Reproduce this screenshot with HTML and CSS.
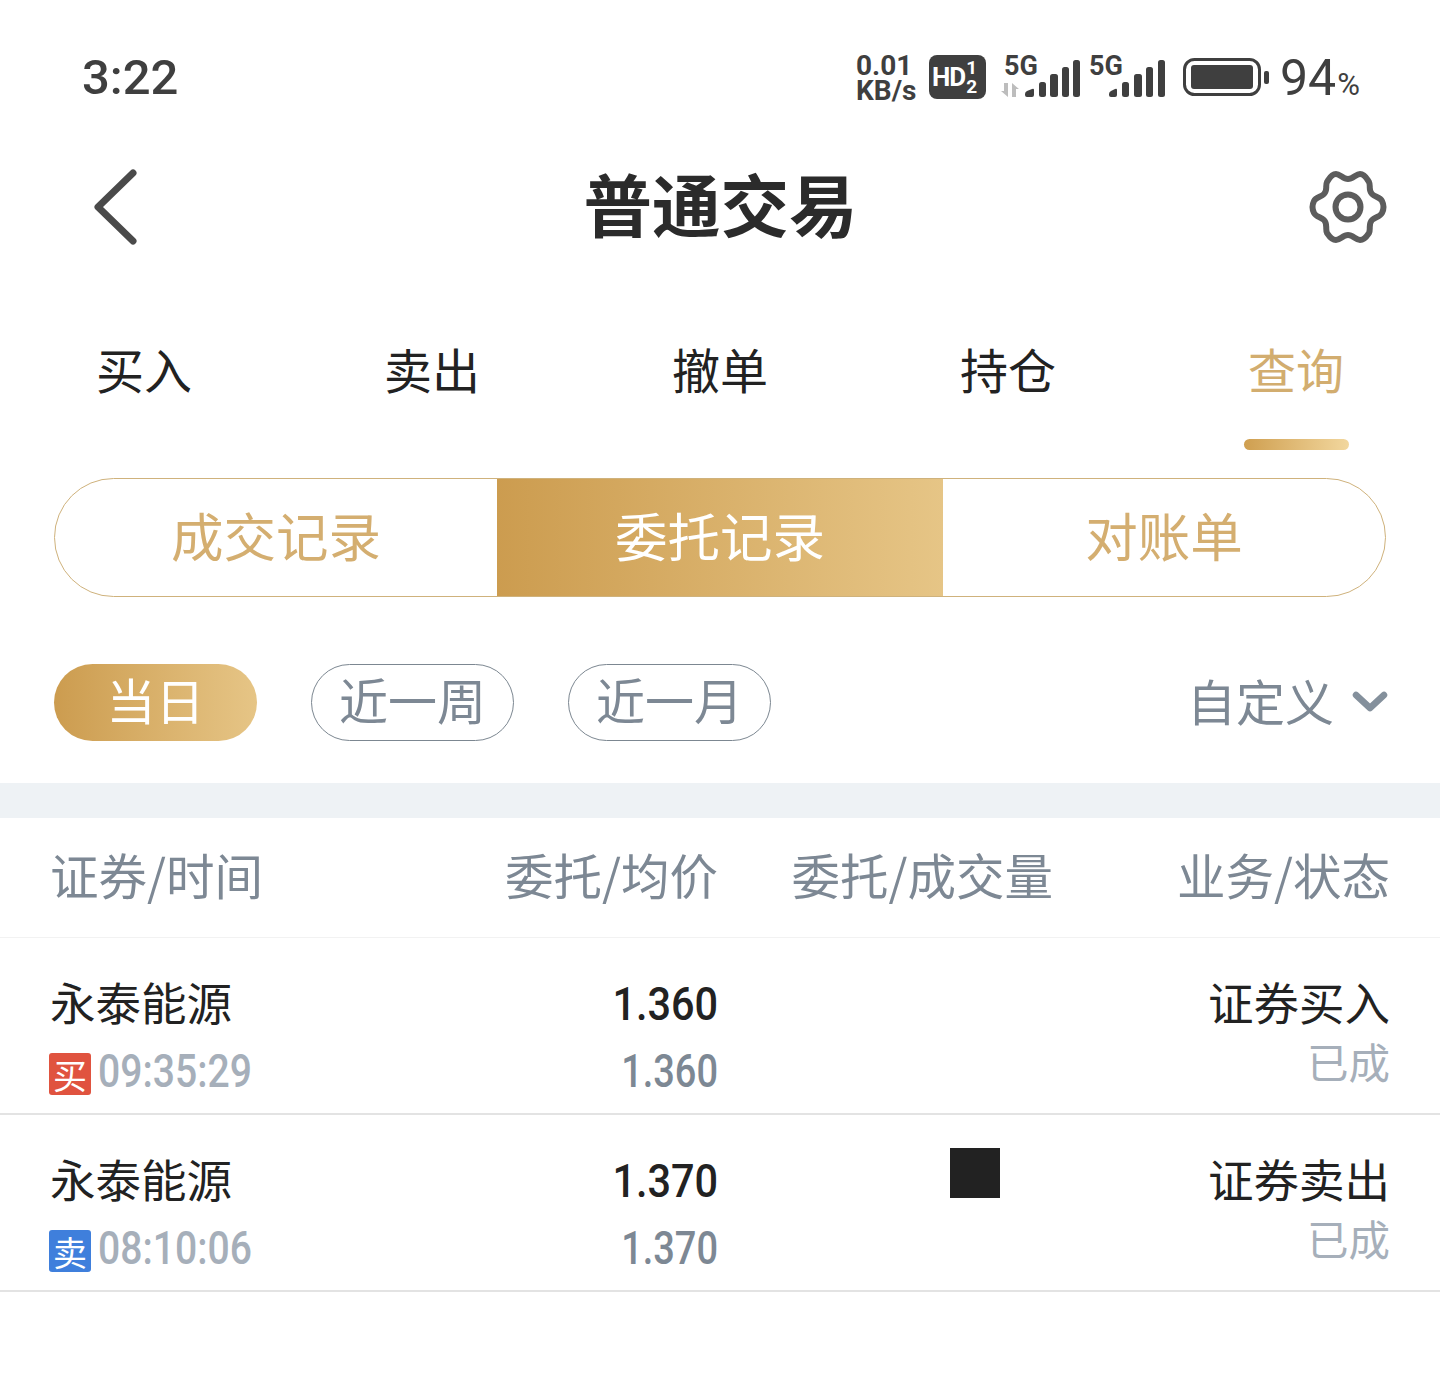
FILE: index.html
```html
<!DOCTYPE html>
<html lang="zh-CN">
<head>
<meta charset="utf-8">
<title>普通交易</title>
<link rel="stylesheet" href="styles.css">
</head>
<body>
<div class="page">
  <div class="statusbar">
    <span class="clock">3:22</span>
    <div class="status-right">
      <div class="speed"><span>0.01</span><span>KB/s</span></div>
      <div class="hd"><span class="hd-t">HD</span><span class="hd-n"><span>1</span><span>2</span></span></div>
      <div class="net net-a">
        <span class="net-t">5G</span>
        <svg class="sig" width="82" height="50" viewBox="0 0 82 50">
          <path d="M4 35h4v14L1 43h3zM12 35v14h4v-8h3z" fill="#bdbdbd"/>
          <path d="M25 46q0-2 2-3l5-2q2-1 2 1v5q0 2-2 2h-5q-2 0-2-2z" fill="#3f3f3f"/>
          <rect x="39" y="34" width="7" height="15" rx="2.500" fill="#3f3f3f"/>
          <rect x="50" y="26" width="8" height="23" rx="2.500" fill="#3f3f3f"/>
          <rect x="62" y="19" width="7" height="30" rx="2.500" fill="#3f3f3f"/>
          <rect x="73" y="12" width="7" height="37" rx="2.500" fill="#3f3f3f"/>
        </svg>
      </div>
      <div class="net net-b">
        <span class="net-t">5G</span>
        <svg class="sig" width="76" height="50" viewBox="0 0 76 50">
          <path d="M20 46q0-2 2-3l4-2q2-1 2 1v5q0 2-2 2h-4q-2 0-2-2z" fill="#3f3f3f"/>
          <rect x="33" y="34" width="7" height="15" rx="2.500" fill="#3f3f3f"/>
          <rect x="45" y="26" width="8" height="23" rx="2.500" fill="#3f3f3f"/>
          <rect x="57" y="19" width="7" height="30" rx="2.500" fill="#3f3f3f"/>
          <rect x="69" y="12" width="7" height="37" rx="2.500" fill="#3f3f3f"/>
        </svg>
      </div>
      <svg class="battery" width="86" height="38" viewBox="0 0 86 38">
        <rect x="1.500" y="1.500" width="75" height="35" rx="10" fill="none" stroke="#3f3f3f" stroke-width="3"/>
        <rect x="8" y="7" width="62" height="24" rx="3" fill="#3f3f3f"/>
        <rect x="81" y="13" width="5" height="13" rx="2" fill="#3f3f3f"/>
      </svg>
      <span class="pct">94<small>%</small></span>
    </div>
  </div>

  <div class="navbar">
    <svg class="back" width="44" height="76" viewBox="0 0 44 76"><path d="M39 4 4 38l35 34" fill="none" stroke="#4a4a4a" stroke-width="7" stroke-linecap="round" stroke-linejoin="round"/></svg>
    <h1 class="title">普通交易</h1>
    <svg class="gear" width="78" height="76" viewBox="0 0 78 76">
      <path d="M27 5c4 0 7 5 12 5s8-5 12-5c5 0 7 5 9 8 2 4-1 8 3 12 3 3 8 3 10 7 2 4 2 8 0 12-2 4-7 4-10 7-4 4-1 9-3 13-2 3-4 7-9 7-4 0-7-5-12-5s-8 5-12 5c-5 0-7-4-9-7-2-4 1-9-3-13-3-3-8-3-10-7-2-4-2-8 0-12 2-4 7-4 10-7 4-4 1-8 3-12 2-3 4-8 9-8z" fill="none" stroke="#5c5c5c" stroke-width="6" stroke-linejoin="round"/>
      <circle cx="39" cy="38" r="12.500" fill="none" stroke="#5c5c5c" stroke-width="6"/>
    </svg>
  </div>

  <div class="tabs">
    <div class="tab">买入</div>
    <div class="tab">卖出</div>
    <div class="tab">撤单</div>
    <div class="tab">持仓</div>
    <div class="tab tab-active">查询</div>
  </div>

  <div class="segment">
    <div class="seg">成交记录</div>
    <div class="seg seg-active">委托记录</div>
    <div class="seg">对账单</div>
  </div>

  <div class="filters">
    <div class="pill pill-active">当日</div>
    <div class="pill">近一周</div>
    <div class="pill">近一月</div>
    <div class="custom"><span class="custom-t">自定义</span>
      <svg class="chev" width="36" height="24" viewBox="0 0 36 24"><path d="M4 5l14 13L32 5" fill="none" stroke="#84909c" stroke-width="6.500" stroke-linecap="round" stroke-linejoin="round"/></svg>
    </div>
  </div>

  <div class="band"></div>

  <div class="thead">
    <div class="c1">证券/时间</div>
    <div class="c2">委托/均价</div>
    <div class="c3">委托/成交量</div>
    <div class="c4">业务/状态</div>
  </div>

  <div class="row">
    <div class="c1">
      <div class="name">永泰能源</div>
      <div class="meta"><span class="badge buy">买</span><span class="num time">09:35:29</span></div>
    </div>
    <div class="c2">
      <div class="num price">1.360</div>
      <div class="num avg">1.360</div>
    </div>
    <div class="c3"></div>
    <div class="c4">
      <div class="biz">证券买入</div>
      <div class="state">已成</div>
    </div>
  </div>

  <div class="row">
    <div class="c1">
      <div class="name">永泰能源</div>
      <div class="meta"><span class="badge sell">卖</span><span class="num time">08:10:06</span></div>
    </div>
    <div class="c2">
      <div class="num price">1.370</div>
      <div class="num avg">1.370</div>
    </div>
    <div class="c3"><span class="mask"></span></div>
    <div class="c4">
      <div class="biz">证券卖出</div>
      <div class="state">已成</div>
    </div>
  </div>
</div>
</body>
</html>
```
FILE: styles.css
```css
* { box-sizing: border-box; }
html, body { margin: 0; padding: 0; background: #fff; }
body { font-family: "Noto Sans CJK SC", "Noto Sans", sans-serif; color: #222; }
.page { width: 1440px; height: 1398px; overflow: hidden; background: #fff; }

.statusbar { height: 154px; display: flex; align-items: flex-start; padding: 49px 80px 0 82px; }
.clock { font-family: Roboto, sans-serif; font-size: 49px; font-weight: 500; line-height: 58px; color: #3f3f3f; }
.status-right { margin: -1px 0 0 auto; display: flex; align-items: flex-start; color: #3f3f3f; font-family: Roboto, sans-serif; }
.speed { width: 62px; margin-top: 5px; display: flex; flex-direction: column; font-size: 28px; line-height: 25px; font-weight: 700; white-space: nowrap; }
.hd { width: 57px; height: 44px; margin: 7px 0 0 11px; border-radius: 8px; background: #3f3f3f; color: #fff; display: flex; align-items: center; padding-left: 3px; font-weight: 700; }
.hd-t { font-size: 26px; letter-spacing: -1px; }
.hd-n { display: flex; flex-direction: column; font-size: 19px; line-height: 19px; margin-left: 1px; }
.net { position: relative; height: 50px; }
.net-a { width: 82px; margin-left: 14px; }
.net-b { width: 76px; margin-left: 7px; }
.net-t { position: absolute; left: 4px; top: 3px; font-size: 27px; line-height: 30px; font-weight: 700; z-index: 1; }
.net-b .net-t { left: 0; }
.sig { display: block; }
.battery { margin: 10px 0 0 18px; flex: none; }
.pct { margin-left: 11px; width: 80px; font-size: 50px; line-height: 60px; white-space: nowrap; }
.pct small { font-size: 31px; margin-left: 1px; }

.navbar { height: 106px; display: flex; align-items: center; padding: 0 53px 0 94px; }
.back { flex: none; }
.title { flex: 1; margin: 0; padding: 0 6px 9px 0; text-align: center; font-size: 68.500px; line-height: 96px; font-weight: 700; color: #2b2b2b; }
.gear { flex: none; }

.tabs { margin-top: 60px; display: grid; grid-template-columns: repeat(5, 288px); height: 158px; }
.tab { font-size: 48px; line-height: 96px; height: 158px; text-align: center; color: #222; position: relative; }
.tab-active { color: #d2ad6f; }
.tab-active::after { content: ""; position: absolute; left: 92px; top: 119px; width: 105px; height: 11px; border-radius: 6px; background: linear-gradient(90deg, #cf9f50, #f2d79e); }

.segment { margin: 0 54px; height: 119px; border: 1px solid #cfb27c; border-radius: 60px; display: grid; grid-template-columns: 442px 446px 1fr; overflow: hidden; }
.seg { font-size: 52.500px; line-height: 111px; text-align: center; color: #d4ae70; }
.seg-active { color: #fff; background: linear-gradient(90deg, #cc9c4f, #e6c586); }

.filters { margin: 67px 52px 0 54px; height: 77px; display: flex; gap: 54px; align-items: center; }
.pill { width: 203px; height: 77px; border: 1px solid #7c8791; border-radius: 39px; font-size: 49px; line-height: 68px; text-align: center; color: #7d8894; }
.pill-active { border: 0; color: #fff; background: linear-gradient(90deg, #cc9c4f, #e6c586); line-height: 70px; }
.custom { margin-left: auto; display: flex; align-items: center; gap: 18px; font-size: 49px; line-height: 71px; color: #7d8894; }
.custom-t { margin-bottom: 6px; }
.chev { margin-bottom: 2px; }

.band { margin-top: 42px; height: 35px; background: #eef2f5; }

.thead, .row { display: grid; grid-template-columns: 370px 298px 335px 337px; padding-left: 50px; }
.thead { height: 120px; border-bottom: 1px solid #f2f2f2; align-items: center; font-size: 48.500px; color: #7d8894; padding-bottom: 8px; line-height: 68px; }
.c2, .c3, .c4 { text-align: right; }

.row { height: 177px; border-bottom: 2px solid #e3e3e3; padding-top: 29px; }
.name { font-size: 45.500px; line-height: 68px; color: #222; }
.meta { display: flex; align-items: flex-start; margin-top: 5px; height: 62px; }
.badge { width: 42px; height: 42px; margin: 13px 0 0 -1px; border-radius: 3px; color: #fff; font-size: 34px; line-height: 44px; text-align: center; }
.buy { background: #e0533f; }
.sell { background: #3f7fdc; }
.num { font-family: Roboto, sans-serif; font-weight: 500; display: block; }
.time { margin-left: 7px; font-size: 46px; line-height: 62px; color: #a6afba; transform: scaleX(.85); transform-origin: left center; }
.price { margin-top: 3px; font-size: 46px; line-height: 68px; color: #222; transform: scaleX(.9); transform-origin: right center; }
.avg { font-size: 46px; line-height: 62px; margin-top: 2px; color: #7d8894; transform: scaleX(.825); transform-origin: right center; }
.c3 { position: relative; }
.mask { position: absolute; left: 232px; top: 4px; width: 50px; height: 50px; background: #222; }
.biz { font-size: 45.500px; line-height: 68px; color: #222; }
.state { font-size: 41.500px; line-height: 50px; margin-top: 1px; color: #a6afba; }
```
